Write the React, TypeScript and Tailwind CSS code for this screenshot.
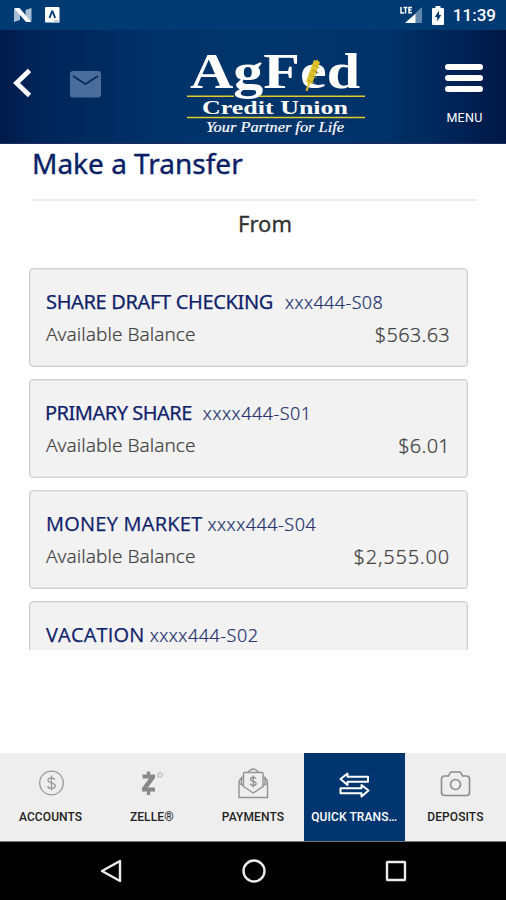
import React from "react";
import clsx from "clsx";

type Account = {
  name: string;
  number: string;
  balance?: string;
  nameClass: string;
  numberClass: string;
  balanceClass?: string;
};

const accounts: Account[] = [
  {
    name: "SHARE DRAFT CHECKING",
    number: "xxx444-S08",
    balance: "$563.63",
    nameClass: "font-['Noto_Sans',sans-serif] tracking-[-0.350px]",
    numberClass: "ml-[12px] tracking-[0.400px]",
    balanceClass: "tracking-[0.250px]",
  },
  {
    name: "PRIMARY SHARE",
    number: "xxxx444-S01",
    balance: "$6.01",
    nameClass: "-ml-[1px] font-['Noto_Sans',sans-serif] tracking-[-0.500px]",
    numberClass: "ml-[11px] tracking-[0.500px]",
    balanceClass: "tracking-[0.250px]",
  },
  {
    name: "MONEY MARKET",
    number: "xxxx444-S04",
    balance: "$2,555.00",
    nameClass: "font-['Open_Sans',sans-serif] tracking-[0.250px]",
    numberClass: "ml-[5px] tracking-[0.500px]",
    balanceClass: "tracking-[0.800px]",
  },
  {
    name: "VACATION",
    number: "xxxx444-S02",
    nameClass: "font-['Open_Sans',sans-serif] tracking-[0.200px]",
    numberClass: "ml-[5px] tracking-[0.500px]",
  },
];

function StatusBar() {
  return (
    <div className="flex h-[30px] items-center justify-between bg-[#003a72] pr-[10px] pl-[13px] text-white">
      <div className="flex items-center gap-[13px]">
        <svg width="19" height="16" viewBox="0 0 19 16">
          <path d="M1 15V2l6 2v9zM18.500 1v13l-6-2V3z" fill="#a9bfd6" />
          <path d="M1 1h5.500L18.500 15H13z" fill="#fff" />
        </svg>
        <svg width="15" height="16" viewBox="0 0 15 16">
          <rect width="14.500" height="15.500" rx="1" fill="#fff" />
          <path d="M4.500 11 7 4.500h.6L10.200 11" fill="none" stroke="#003a72" strokeWidth="1.800" />
          <path d="M8 15.500 10 13h4.500v2.500z" fill="#c3cedb" />
        </svg>
      </div>
      <div className="flex items-center">
        <svg width="23" height="18" viewBox="0 0 23 18">
          <path d="M22 1v16H5z" fill="#5f86ab" />
          <path d="M15.500 8v9H5z" fill="#fff" />
          <path d="M1 1v6h3M3.500 1.500h4M5.500 1.500v6M12 1.500H9v5.300h3M9 4h2.500" fill="none" stroke="#fff" strokeWidth="1.500" />
        </svg>
        <svg className="ml-[9px]" width="12" height="19" viewBox="0 0 12 19">
          <path d="M3.500 0h5v2H11a1 1 0 0 1 1 1v15a1 1 0 0 1-1 1H1a1 1 0 0 1-1-1V3a1 1 0 0 1 1-1h2.500z" fill="#fff" />
          <path d="M7 4.500 2.800 11h2.400v4.500L9.300 9H7z" fill="#003a72" />
        </svg>
        <span className="ml-[9px] font-['Roboto',sans-serif] text-[17px] leading-none font-medium">11:39</span>
      </div>
    </div>
  );
}

function Logo() {
  return (
    <svg className="overflow-visible" width="184" height="106" viewBox="184 34 184 106">
      <g fill="#fff" fontFamily="'Liberation Serif', serif">
        <text x="190" y="87.500" fontSize="51" fontWeight="700" textLength="170" lengthAdjust="spacingAndGlyphs">
          AgFed
        </text>
        <text x="202" y="113.500" fontSize="19.500" fontWeight="700" textLength="146" lengthAdjust="spacingAndGlyphs">
          Credit Union
        </text>
        <text x="206" y="131.500" fontSize="15" fontStyle="italic" textLength="138" lengthAdjust="spacingAndGlyphs" stroke="#fff" strokeWidth="0.200">
          Your Partner for Life
        </text>
      </g>
      <path d="M187 96.200h47M259 96.200h106M187 117.500h178" stroke="#e3cb2c" strokeWidth="1.600" />
      <path d="m306.500 91 11-31" stroke="#e0c22a" strokeWidth="2" />
      <path d="m309 83 8-22" stroke="#e0c22a" strokeWidth="6.500" />
      <path d="m308 80 7 3m-5-8 7 3m-5-8 7 3m-5-8 6 3" stroke="#a8962c" strokeWidth="0.800" />
    </svg>
  );
}

function Header() {
  return (
    <header className="flex h-[114px] border-b border-[#1d2c5c] bg-[linear-gradient(90deg,#001a4a_0%,#00265a_8%,#002a60_18%,#003268_32%,#00356c_50%,#003268_76%,#00265a_88%,#001745_100%)] text-white">
      <div className="flex w-[184px] items-start pt-[38px] pl-[12px]">
        <svg width="20" height="30" viewBox="0 0 20 30">
          <path d="M17.500 2.500 4.500 15l13 12.500" fill="none" stroke="#fff" strokeWidth="4.800" />
        </svg>
        <svg className="mt-[3px] ml-[37px]" width="33" height="27" viewBox="0 0 33 27">
          <rect x="1" width="31" height="26.500" rx="3" fill="#4b6d9b" />
          <path d="m4 5 12.500 8L29 5" fill="none" stroke="#0b2d60" strokeWidth="2" />
        </svg>
      </div>
      <div className="pt-[4px]">
        <Logo />
      </div>
      <div className="ml-[61px] flex w-[70px] flex-col items-center pt-[34px]">
        <div className="flex flex-col gap-[5px]">
          <span className="h-[6px] w-[38px] rounded-full bg-white" />
          <span className="h-[6px] w-[38px] rounded-full bg-white" />
          <span className="h-[6px] w-[38px] rounded-full bg-white" />
        </div>
        <span className="mt-[19px] pl-[1px] font-['Roboto',sans-serif] text-[12.500px] leading-[14px] tracking-[0.300px]">MENU</span>
      </div>
    </header>
  );
}

function AccountCard({ account }: { account: Account }) {
  return (
    <div className="h-[99px] shrink-0 rounded-[4px] border-[1.500px] border-[#d0d0d0] bg-[#f2f2f2] pt-[19px] pr-[17px] pl-[16px] shadow-[inset_0_0_0_0.500px_#d8d8d8]">
      <div className="flex items-baseline leading-[28px] whitespace-nowrap text-[#10226a]">
        <span className={clsx("text-[20px] [-webkit-text-stroke:0.25px_#10226a]", account.nameClass)}>{account.name}</span>
        <span className={clsx("font-['Noto_Sans',sans-serif] text-[18px] font-light text-[#26346f] [-webkit-text-stroke:0.2px_#26346f]", account.numberClass)}>
          {account.number}
        </span>
      </div>
      {account.balance && (
        <div className="mt-[4px] flex items-baseline justify-between font-['Noto_Sans',sans-serif] leading-[28px] font-light text-[#444] [-webkit-text-stroke:0.2px_#444]">
          <span className="text-[19px] tracking-[0.050px]">Available Balance</span>
          <span className={clsx("relative top-[1px] text-[20px]", account.balanceClass)}>{account.balance}</span>
        </div>
      )}
    </div>
  );
}

function AccountsIcon() {
  return (
    <svg width="32" height="32" viewBox="0 0 32 32" fill="none" stroke="#999" strokeWidth="1.300">
      <circle cx="16.500" cy="16" r="11.800" />
      <path d="M20 12.800c-.5-1.300-1.800-2-3.500-2-2 0-3.500.9-3.500 2.500 0 3.500 7.200 1.800 7.200 5.500 0 1.700-1.600 2.600-3.700 2.600s-3.400-.9-3.800-2.400M16.500 8.500v15" />
    </svg>
  );
}

function ZelleIcon() {
  return (
    <svg width="32" height="32" viewBox="0 0 32 32" fill="none">
      <path d="M6.500 7.500H19v3.500l-7 9.500h7v4H6v-3.500L13 11.500H6.500z" fill="#888" />
      <path d="M12.500 4.500V9M12.500 23v5" stroke="#888" strokeWidth="3.400" />
      <circle cx="23.800" cy="8" r="2.600" stroke="#bbb" strokeWidth="1" />
      <path d="M23 9.500v-3h1.500M24.700 9.500l-1-1.500" stroke="#bbb" strokeWidth=".6" />
    </svg>
  );
}

function PaymentsIcon() {
  return (
    <svg width="32" height="32" viewBox="0 0 32 32" fill="none" stroke="#929292" strokeWidth="1.400">
      <path d="M5 11c-2 1-3 2.500-3 5v14.500h28.500V16c0-2.500-1-4-3-5M2.500 16.500 6.500 19M30 16.500 26 19" />
      <path d="M6.500 19.500V6.500c0-.6.400-1 1-1h17.500c.6 0 1 .4 1 1v13L16.200 26zM4.500 17.500V10.500h2M28 17.500V10.500h-2" />
      <path d="M11 5.500c1.500-2 3-3.500 5.200-3.500s3.800 1.500 5.300 3.500" />
      <path d="M19 11.800c-.5-1-1.400-1.500-2.700-1.500-1.600 0-2.800.7-2.800 2 0 2.700 5.600 1.400 5.600 4.200 0 1.400-1.200 2.100-2.900 2.100s-2.600-.7-3-1.800M16.300 8.500v12" />
    </svg>
  );
}

function TransferIcon() {
  return (
    <svg width="32" height="32" viewBox="0 0 32 32" fill="none" stroke="#fff" strokeWidth="2" strokeLinejoin="round">
      <path d="M2.500 12 9.500 6.500v3.200H30v5H9.500V18z" />
      <path d="M30.500 23.500 23.500 18v3.200H2.500v5h21v3.300z" />
    </svg>
  );
}

function DepositsIcon() {
  return (
    <svg width="32" height="32" viewBox="0 0 32 32" fill="none" stroke="#8c8c8c" strokeWidth="1.600">
      <path d="M2.500 12a3 3 0 0 1 3-3h4l1.500-3c.3-.6.800-1 1.500-1h8c.7 0 1.200.4 1.500 1l1.500 3h4a3 3 0 0 1 3 3v13.500a3 3 0 0 1-3 3h-22a3 3 0 0 1-3-3z" />
      <circle cx="16.500" cy="17.500" r="5" />
    </svg>
  );
}

const tabs = [
  { label: "ACCOUNTS", icon: <AccountsIcon /> },
  { label: "ZELLE®", icon: <ZelleIcon /> },
  { label: "PAYMENTS", icon: <PaymentsIcon /> },
  { label: "QUICK TRANS…", icon: <TransferIcon />, active: true },
  { label: "DEPOSITS", icon: <DepositsIcon /> },
];

function TabBar() {
  return (
    <nav className="grid h-[88px] grid-cols-5 bg-[#eeeeee]">
      {tabs.map((tab) => (
        <div
          key={tab.label}
          className={clsx(
            "flex flex-col items-center pt-[14px] font-['Roboto',sans-serif] text-[12px] font-medium",
            tab.active ? "bg-[#003570] text-white" : "text-[#222]"
          )}
        >
          {tab.icon}
          <span className="mt-[11px] leading-[14px] tracking-[0.100px] whitespace-nowrap">{tab.label}</span>
        </div>
      ))}
    </nav>
  );
}

function SystemNav() {
  return (
    <div className="flex h-[59px] items-center justify-center border-t border-[#777] bg-black">
      <svg width="320" height="26" viewBox="0 0 320 26" fill="none" stroke="#ececec" strokeWidth="2.400">
        <path d="M27 3v20L9 13z" strokeLinejoin="round" />
        <circle cx="161" cy="13" r="10.500" />
        <rect x="294" y="4" width="18" height="18" rx="0.500" />
      </svg>
    </div>
  );
}

export default function App() {
  return (
    <div className="flex h-[900px] w-[506px] flex-col overflow-hidden bg-white">
      <StatusBar />
      <Header />
      <main className="flex h-[609px] flex-col">
        <h1 className="ml-[32px] font-['Noto_Sans',sans-serif] text-[28px] leading-[38px] text-[#0b1f66] [-webkit-text-stroke:0.4px_#0b1f66]">
          Make a Transfer
        </h1>
        <div className="mt-[17px] mr-[29px] ml-[32px] h-[2px] bg-[#ececec]" />
        <h2 className="mt-[6px] ml-[24px] text-center font-['Noto_Sans',sans-serif] text-[22px] leading-[32px] text-[#333] [-webkit-text-stroke:0.3px_#333]">
          From
        </h2>
        <div className="mt-[29px] mr-[38px] ml-[29px] flex h-[382px] flex-col gap-[12px] overflow-hidden">
          {accounts.map((account) => (
            <AccountCard key={account.name} account={account} />
          ))}
        </div>
      </main>
      <TabBar />
      <SystemNav />
    </div>
  );
}
